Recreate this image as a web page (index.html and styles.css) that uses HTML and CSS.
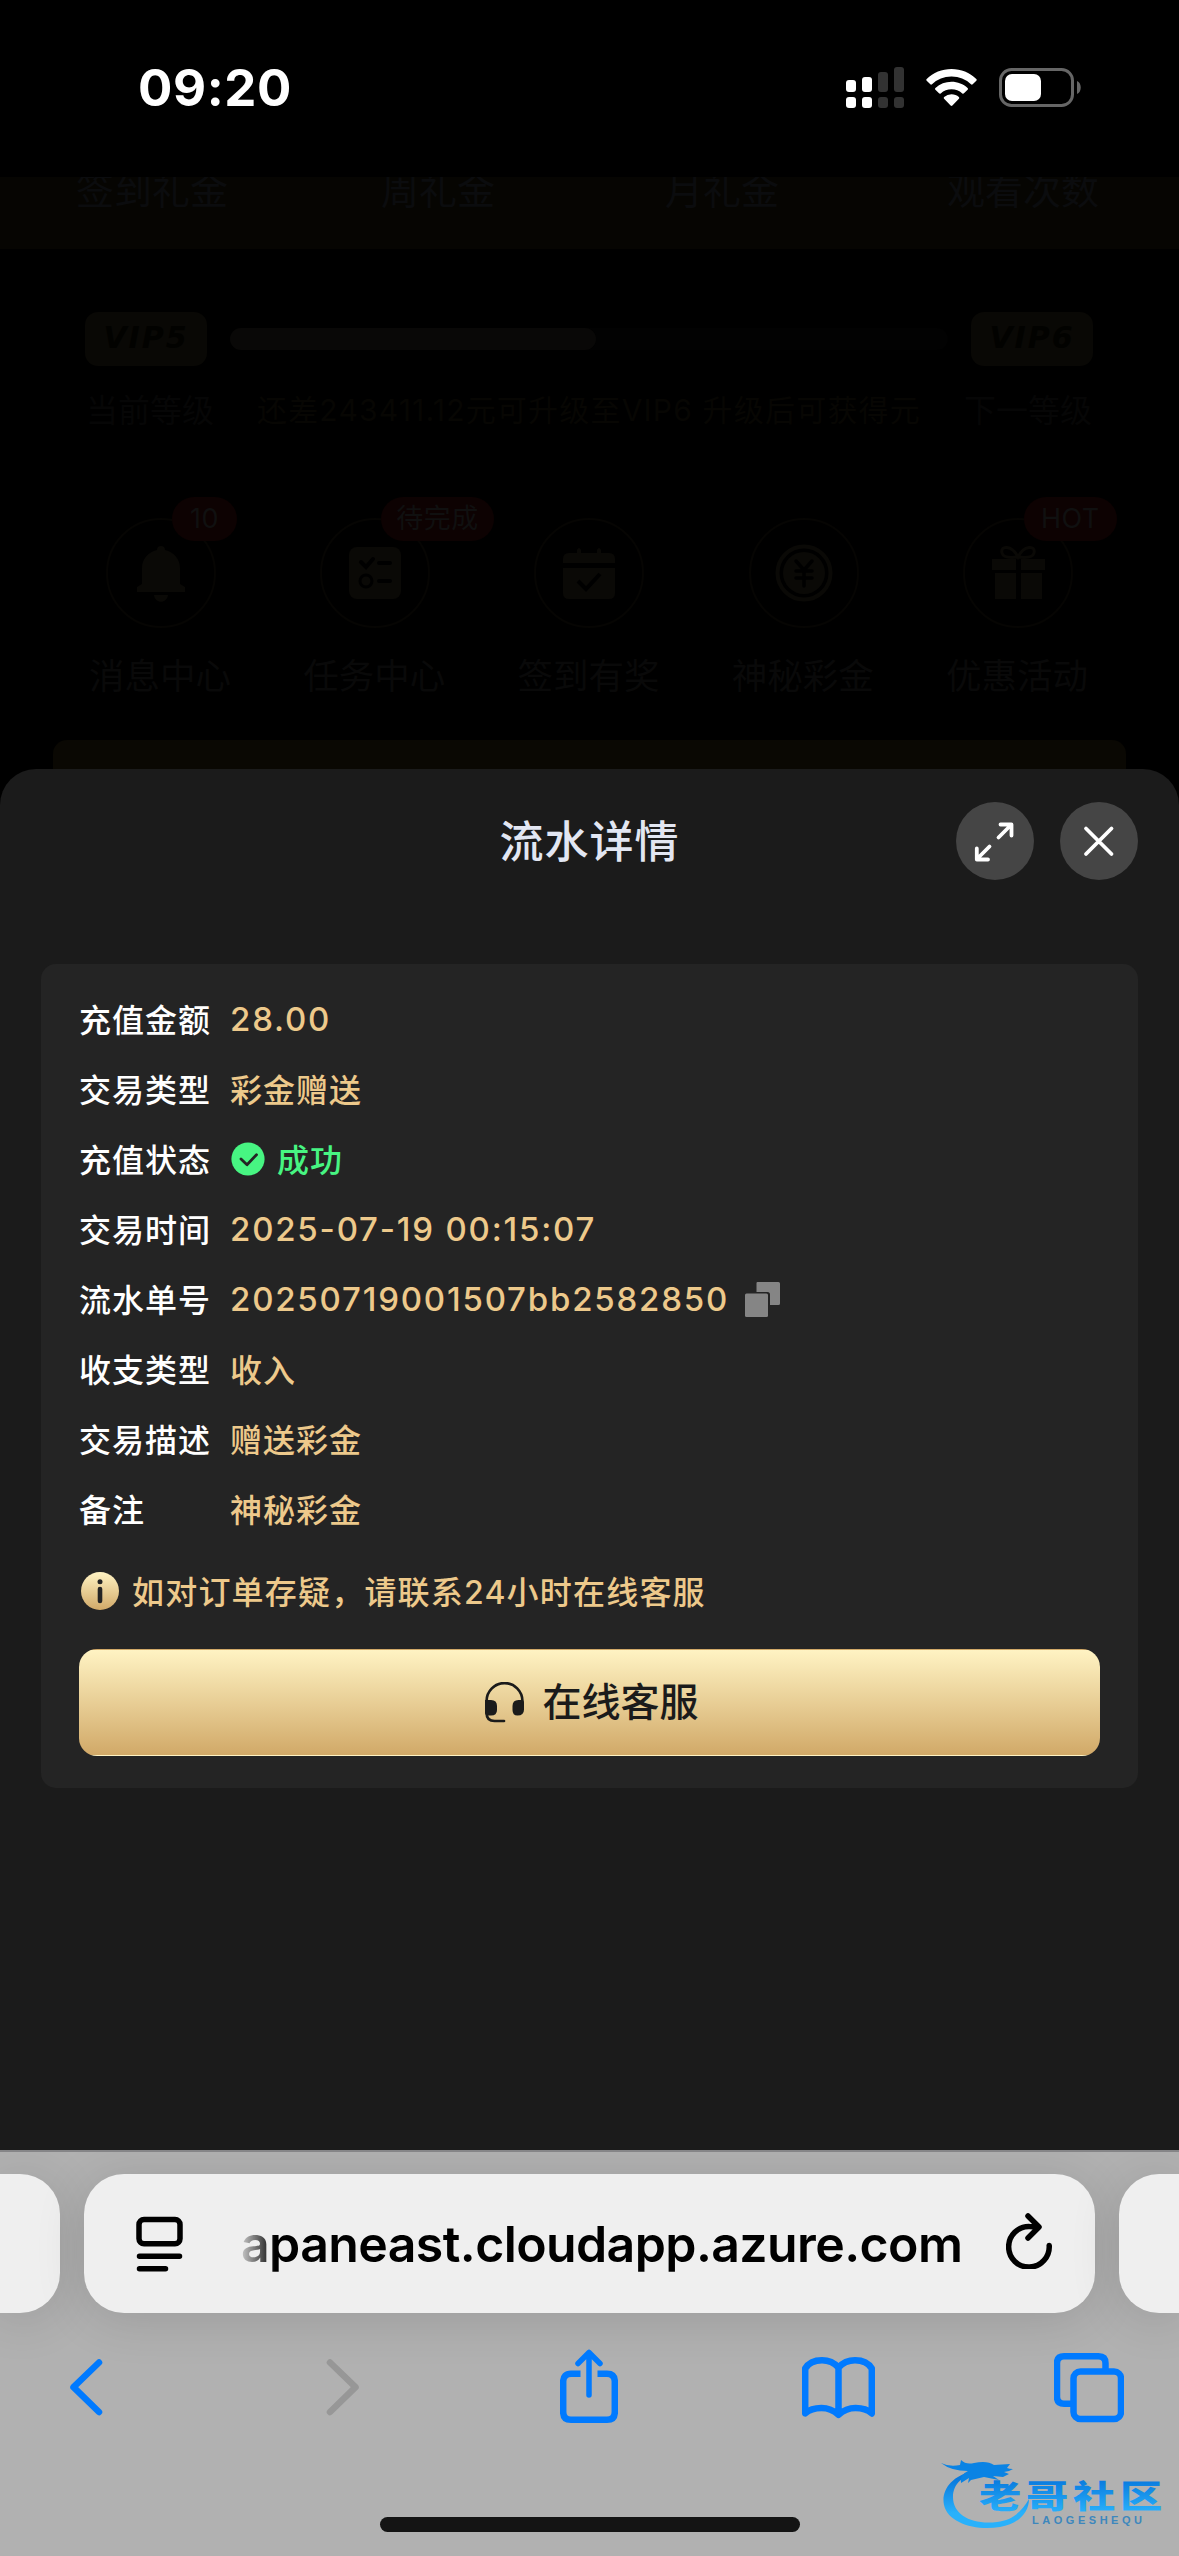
FILE: index.html
```html
<!DOCTYPE html>
<html lang="zh-CN">
<head>
<meta charset="utf-8">
<title>流水详情</title>
<link rel="stylesheet" href="styles.css">
</head>
<body>
<div class="screen">
  <header class="status">
    <span class="time">09:20</span>
    <div class="status-icons">
      <svg class="signal" width="58" height="42" viewBox="0 0 58 42">
        <g fill="#fff"><rect x="0" y="13" width="10" height="12" rx="3"/><rect x="16" y="10" width="10" height="15" rx="3"/><rect x="0" y="30" width="10" height="11" rx="3"/><rect x="16" y="30" width="10" height="11" rx="3"/></g>
        <g fill="#323232"><rect x="32" y="5" width="10" height="20" rx="3"/><rect x="48" y="0" width="10" height="25" rx="3"/><rect x="32" y="30" width="10" height="11" rx="3"/><rect x="48" y="30" width="10" height="11" rx="3"/></g>
      </svg>
      <svg class="wifi" width="51" height="38" viewBox="0 0 51 38" fill="#fff">
        <path d="M25.500 0C35 0 43.800 3.700 50.300 9.900q.9.900 0 1.800l-3.600 3.600q-.8.800-1.700 0A28 28 0 0 0 25.500 7.600 28 28 0 0 0 6 15.300q-.9.800-1.700 0L.7 11.700q-.9-.9 0-1.800C7.200 3.700 16 0 25.500 0z"/>
        <path d="M25.500 12.700c6.200 0 11.800 2.300 16.100 6.200q.9.900 0 1.800L38 24.300q-.8.800-1.700.1a16.200 16.200 0 0 0-21.600 0q-.9.700-1.700-.1l-3.600-3.600q-.9-.9 0-1.800a24 24 0 0 1 16.100-6.200z"/>
        <path d="M25.500 25.300c2.800 0 5.400 1 7.400 2.700q.9.900 0 1.800l-6.500 6.700q-.9.900-1.800 0l-6.500-6.700q-.9-.9 0-1.800a11.500 11.500 0 0 1 7.400-2.700z"/>
      </svg>
      <svg class="battery" width="83" height="39" viewBox="0 0 83 39">
        <rect x="1.500" y="1.500" width="72" height="36" rx="11" fill="none" stroke="#666" stroke-width="3"/>
        <rect x="6" y="6" width="36" height="27" rx="7" fill="#fff"/>
        <path d="M78 13c5 2 5 11 0 13z" fill="#666"/>
      </svg>
    </div>
  </header>

  <section class="page">
    <div class="gifts"><span>签到礼金</span><span>周礼金</span><span>月礼金</span><span>观看次数</span></div>
    <div class="vip">
      <div class="level"><b>VIP5</b></div>
      <div class="track"><div class="fill"></div></div>
      <div class="level"><b>VIP6</b></div>
    </div>
    <div class="vip-text"><span>当前等级</span><em>还差243411.12元可升级至VIP6 升级后可获得元</em><span>下一等级</span></div>
    <nav class="shortcuts">
      <a class="shortcut">
        <div class="ring"><svg width="60" height="60" viewBox="0 0 60 60" fill="#0a0906"><path d="M26 7a4 4 0 0 1 8 0c9 2 15 9 15 18v16l5 3v5H6v-5l5-3V25c0-9 6-16 15-18zM23 52h14c-1 9-13 9-14 0z"/></svg><i class="tag tag-count">10</i></div>
        <span>消息中心</span>
      </a>
      <a class="shortcut">
        <div class="ring"><svg width="60" height="60" viewBox="0 0 60 60"><rect x="4" y="4" width="52" height="52" rx="8" fill="#0a0906"/><path d="M16 19l5 5 7-8M34 20h11M34 38h11" fill="none" stroke="#000" stroke-width="4" stroke-linecap="round"/><circle cx="21" cy="38" r="6" fill="none" stroke="#000" stroke-width="3"/></svg><i class="tag tag-todo">待完成</i></div>
        <span>任务中心</span>
      </a>
      <a class="shortcut">
        <div class="ring"><svg width="60" height="60" viewBox="0 0 60 60" fill="#0a0906"><path d="M4 20v-4q0-6 6-6h8V7q2-4 4 0v3h16V7q2-4 4 0v3h8q6 0 6 6v4zM4 25h52v25q0 6-6 6H10q-6 0-6-6z"/><path d="M19 38l8 8 14-15" fill="none" stroke="#000" stroke-width="4"/></svg></div>
        <span>签到有奖</span>
      </a>
      <a class="shortcut">
        <div class="ring"><svg width="60" height="60" viewBox="0 0 60 60"><circle cx="30" cy="30" r="26.500" fill="none" stroke="#0a0906" stroke-width="4"/><circle cx="30" cy="30" r="21" fill="#0a0906"/><path d="M22 18l8 9 8-9M22 28h16M22 35h16M30 27v16" fill="none" stroke="#000" stroke-width="3.500" stroke-linecap="round"/></svg></div>
        <span>神秘彩金</span>
      </a>
      <a class="shortcut">
        <div class="ring"><svg width="60" height="60" viewBox="0 0 60 60" fill="#0a0906"><path d="M4 16h24v11H4zM33 16h24v11H33zM7 30h21v26H7zM33 30h21v26H33z"/><path d="M30 14c-6-12-18-12-16-4 1 4 8 5 16 4 8 1 15 0 16-4 2-8-10-8-16 4z" fill="none" stroke="#0a0906" stroke-width="3"/></svg><i class="tag">HOT</i></div>
        <span>优惠活动</span>
      </a>
    </nav>
    <div class="banner"></div>
  </section>

  <main class="sheet">
    <div class="sheet-head">
      <h1>流水详情</h1>
      <div class="actions">
        <button class="round"><svg width="78" height="78" viewBox="0 0 78 78"><path d="M42.500 35.500L55 23M44.500 22.500H55.500V33.500M33.500 44.500L21 57M20.800 46.500V57.500H32" /></svg></button>
        <button class="round"><svg width="78" height="78" viewBox="0 0 78 78"><path d="M26 26.500L51.500 52M51.500 26.500L26 52"/></svg></button>
      </div>
    </div>
    <article class="card">
      <dl>
        <div class="row"><dt>充值金额</dt><dd class="latin">28.00</dd></div>
        <div class="row"><dt>交易类型</dt><dd>彩金赠送</dd></div>
        <div class="row"><dt>充值状态</dt><dd class="ok"><svg width="34" height="34" viewBox="0 0 34 34"><circle cx="17" cy="17" r="16.600" fill="#47f582"/><path d="M10 17l6 5.700 9.500-10" fill="none" stroke="#242424" stroke-width="2.800" stroke-linecap="round" stroke-linejoin="round"/></svg><span>成功</span></dd></div>
        <div class="row"><dt>交易时间</dt><dd class="latin">2025-07-19 00:15:07</dd></div>
        <div class="row"><dt>流水单号</dt><dd class="latin serial">20250719001507bb2582850<svg width="35" height="35" viewBox="0 0 35 35" fill="#858585"><path d="M12.500 0h21q1.500 0 1.500 1.500v20q0 1.500-1.500 1.500H25V12.500Q25 10 22.500 10H11.500V1q0-1 1-1z"/><rect x="0" y="11.500" width="23" height="23.500" rx="1.500"/></svg></dd></div>
        <div class="row"><dt>收支类型</dt><dd>收入</dd></div>
        <div class="row"><dt>交易描述</dt><dd>赠送彩金</dd></div>
        <div class="row"><dt>备注</dt><dd>神秘彩金</dd></div>
      </dl>
      <p class="hint">
        <svg width="38" height="38" viewBox="0 0 38 38"><defs><linearGradient id="gold" x2="0" y2="1"><stop stop-color="#fff3c3"/><stop offset="1" stop-color="#d1a968"/></linearGradient></defs><circle cx="19" cy="19" r="19" fill="url(#gold)"/><circle cx="19" cy="9.700" r="2.500" fill="#242424"/><path d="M19 17v12" stroke="#242424" stroke-width="4.600" stroke-linecap="round"/></svg>
        <span>如对订单存疑，请联系24小时在线客服</span>
      </p>
      <button class="service">
        <svg width="39" height="41" viewBox="0 0 39 41"><path d="M1.600 24V19a17.900 17.900 0 0 1 35.800 0v6M1.600 25v6q0 8 8 8H19" fill="none" stroke="#1b1b1b" stroke-width="2.700" stroke-linecap="round"/><path d="M0 18H6q6 0 6 6v4q0 5.500-6 5.500H3q-3 0-3-3zM39 21q0-3-3-3h-2.500q-6 0-6 6v4q0 5.500 5 5.500 6.500 0 6.500-6z" fill="#1b1b1b"/></svg>
        <span>在线客服</span>
      </button>
    </article>
  </main>

  <footer class="browser">
    <div class="tabs">
      <div class="pill side-left"></div>
      <div class="pill address">
        <svg width="47" height="56" viewBox="0 0 47 56" fill="none" stroke="#000" stroke-width="5.500" stroke-linecap="round"><rect x="3" y="3.600" width="41" height="24.200" rx="5"/><path d="M3.500 40.200h40M3.500 52.800h26"/></svg>
        <div class="url">apaneast.cloudapp.azure.com</div>
        <svg class="reload" width="47" height="56" viewBox="0 0 47 56" fill="none" stroke="#000" stroke-width="5.500" stroke-linecap="round" stroke-linejoin="round"><path d="M43.200 32.500A20.300 20.300 0 1 1 23.500 13.500Q28 13.500 32 14M22 3l11 11-11 11"/></svg>
      </div>
      <div class="pill side-right"></div>
    </div>
    <nav class="toolbar">
      <svg class="back" width="34" height="75" viewBox="0 0 34 75"><path d="M30 13.500L4.500 38.200 30 63"/></svg>
      <svg class="off" width="34" height="75" viewBox="0 0 34 75"><path d="M4 13.500l25.500 24.700L4 63"/></svg>
      <svg width="58" height="75" viewBox="0 0 58 75"><path d="M20.500 24.800H11Q3.200 24.800 3.200 32.600V63Q3.200 70.800 11 70.800H47Q54.800 70.800 54.800 63V32.600Q54.800 24.800 47 24.800H37.500" stroke-linecap="butt"/><path d="M29 46V4M18 14.500L29 3.500l11 11" stroke-width="5.500"/></svg>
      <svg width="73" height="75" viewBox="0 0 73 75"><path d="M36.500 18.500Q30 11.200 20 11.200 8 11.200 3.200 19.500V64.500Q9 59 19.500 59 29 59 36.500 65.800 44 59 53.500 59 64 59 69.800 64.500V19.500Q65 11.200 53 11.200 43 11.200 36.500 18.500zV65"/></svg>
      <svg width="70" height="75" viewBox="0 0 70 75"><rect x="19.500" y="22.500" width="47.500" height="47.500" rx="7"/><path d="M51.500 22V14.300Q51.500 7.300 44.500 7.300H10Q3 7.300 3 14.300V47.700Q3 54.700 10 54.700H19" stroke-linecap="butt"/></svg>
    </nav>
    <div class="home-bar"></div>
    <div class="watermark">
      <svg width="224" height="74" viewBox="0 0 224 74">
        <defs><linearGradient id="blue" gradientUnits="userSpaceOnUse" x1="0" y1="20" x2="0" y2="54"><stop stop-color="#0879de"/><stop offset="1" stop-color="#29b1fb"/></linearGradient></defs>
        <path d="M32 12C10 17 0 32 3 46c4 18 31 26 56 22 18-3 29-14 29-28-7 12-16 21-32 23C31 66 12 56 12 38 12 25 22 16 36 14z" fill="url(#blue)"/>
        <path d="M0 4q8 4 19 2l1-5q5 5 13 3 13-3 20 2l16-1-3 4q2 1 6 1l-4 2-5 1 5 2-6 3-10-1 6 4-15-3-13 3-3 3 1-5-8 5q-2-8 7-12Q10 12 0 4z" fill="#0a83e4"/>
        <g transform="translate(38 0) scale(1.320 1)"><text class="mark-cn" x="0" y="49" fill="url(#blue)">老哥社区</text></g>
        <text class="mark-en" x="91" y="65" textLength="110" fill="#3d87bd">LAOGESHEQU</text>
      </svg>
    </div>
  </footer>
</div>
</body>
</html>
```
FILE: styles.css
```css
* { box-sizing: border-box; }
body { margin: 0; background: #000; font-family: Inter, "Noto Sans CJK SC", sans-serif; }
h1, dl, dd, p { margin: 0; }
button { padding: 0; border: 0; font: inherit; }
svg { display: block; flex: none; }
.screen { width: 1179px; height: 2556px; display: flex; flex-direction: column; overflow: hidden; background: #000; }

.status { height: 177px; flex: none; display: flex; justify-content: space-between; padding: 0 97px 0 138px; color: #fff; }
.time { margin-top: 56px; line-height: 64px; font-size: 51px; font-weight: 700; letter-spacing: .6px; }
.status-icons { display: flex; align-items: flex-start; gap: 22px; padding-top: 67px; }
.wifi { margin-top: 2px; }
.battery { margin-top: 1px; }

.page { height: 628px; flex: none; display: flex; flex-direction: column; overflow: hidden; color: #090909; white-space: nowrap; }
.gifts { height: 72px; flex: none; display: grid; grid-template-columns: 304px 268px 300px 302px; background: #060502; color: #0b0c0e; font-size: 38px; line-height: 26px; text-align: center; }
.vip { display: flex; align-items: center; margin: 63px 86px 0 85px; }
.level { width: 122px; height: 54px; flex: none; border-radius: 13px; background: #090805; color: #020200; text-align: center; line-height: 52px; }
.level b { font-family: "DejaVu Sans", sans-serif; font-style: italic; font-size: 30px; letter-spacing: 2px; }
.track { flex: 1; height: 22px; margin: 0 23px; border-radius: 11px; background: #020202; }
.fill { width: 51%; height: 22px; border-radius: 11px; background: #090807; }
.vip-text { display: flex; justify-content: space-between; align-items: center; height: 60px; margin: 12px 87px 0 86px; font-size: 32px; color: #060606; }
.vip-text em { font-style: normal; font-size: 30px; letter-spacing: 1.2px; color: #070603; }
.shortcuts { display: grid; grid-template-columns: repeat(5, 1fr); height: 222px; margin: 80px 54px 0 54px; }
.shortcut { display: flex; flex-direction: column; align-items: center; font-size: 35.500px; }
.shortcut > span { margin: 27px 2px 0 0; line-height: 44px; }
.ring { width: 110px; height: 110px; border: 2px solid #060503; border-radius: 50%; display: grid; place-items: center; position: relative; }
.tag { position: absolute; left: 59px; top: -23px; height: 44px; padding: 0 17px; border-radius: 22px; background: #0d0202; color: #101010; font-style: normal; font-size: 27px; line-height: 44px; letter-spacing: .5px; }
.tag-count { left: 64px; padding: 0 18px; }
.tag-todo { padding: 0 15px; }
.banner { flex: 1; margin: 0 53px; border-radius: 14px 14px 0 0; background: #0a0803; }

.sheet { flex: 1; margin-top: -36px; padding: 0 41px; border-radius: 36px 36px 0 0; background: #1b1b1b; position: relative; }
.sheet-head { height: 195px; display: grid; grid-template-columns: 182px 1fr 182px; padding-top: 33px; align-items: start; }
.sheet-head h1 { grid-column: 2; line-height: 80px; font-size: 44px; font-weight: 500; letter-spacing: 1px; text-align: center; color: #e2e6f2; }
.actions { display: flex; gap: 26px; }
.round { width: 78px; height: 78px; border-radius: 50%; background: #454545; }
.round svg { fill: none; stroke: #fff; stroke-width: 3.800; stroke-linecap: round; stroke-linejoin: round; }

.card { height: 824px; padding: 21px 38px 32px; border-radius: 15px; background: #242424; font-size: 32px; font-weight: 500; letter-spacing: 1px; }
.row { display: flex; height: 70px; align-items: center; padding-bottom: 4px; }
.row dt { width: 151px; color: #fff; }
.row dd { display: flex; align-items: center; color: #edc98b; }
.row .latin { font-size: 33px; font-weight: 550; letter-spacing: 1.800px; padding-top: 2px; }
.row .ok { gap: 12px; color: #47f582; }
.ok svg { margin: 2px 0 0 1px; }
.serial svg { margin: 0 0 0 16px; }
.hint { display: flex; align-items: center; gap: 13px; height: 92px; padding-left: 2px; color: #edc98b; }
.hint span { padding-bottom: 3px; letter-spacing: 1.200px; }
.service { display: flex; align-items: center; justify-content: center; gap: 18px; width: 1021px; height: 107px; margin-top: 12px; padding-left: 5px; border: 1px solid transparent; border-radius: 18px; background: linear-gradient(#fff3c3, #d1a968); color: #1b1b1b; font-size: 39px; font-weight: 500; }
.service span { padding-bottom: 7px; }

.browser { height: 406px; flex: none; border-top: 2px solid #858587; background: #b1b1b1; overflow: hidden; position: relative; }
.tabs { display: flex; gap: 24px; padding-top: 22px; }
.pill { height: 139px; flex: none; background: #efefef; box-shadow: 0 6px 50px rgba(0, 0, 0, .13); }
.side-left { width: 60px; border-radius: 0 40px 40px 0; }
.side-right { width: 60px; border-radius: 40px 0 0 40px; }
.address { width: 1011px; display: flex; align-items: center; justify-content: space-between; padding: 0 42px 0 52px; border-radius: 40px; }
.url { flex: none; width: 730px; margin-left: 23px; font-size: 50px; line-height: 64px; font-weight: 600; letter-spacing: -.600px; color: #000; white-space: nowrap; -webkit-mask-image: linear-gradient(90deg, rgba(0,0,0,.15), #000 34px); mask-image: linear-gradient(90deg, rgba(0,0,0,.15), #000 34px); }
.reload { margin-top: -6px; }
.toolbar { display: grid; grid-template-columns: repeat(5, 250px); justify-content: center; justify-items: center; padding: 36px 2px 0 0; }
.toolbar svg { fill: none; stroke: #007aff; stroke-width: 6.500; stroke-linecap: round; stroke-linejoin: round; }
.toolbar .back { margin-right: 6px; }
.toolbar .off { margin-left: 9px; stroke: #979797; }
.home-bar { width: 420px; height: 15px; margin: 93px auto 0; border-radius: 8px; background: #141414; }
.watermark { position: absolute; left: 941px; top: 307px; }
.mark-cn { font-family: "Noto Sans CJK SC", sans-serif; font-size: 32px; font-weight: 900; letter-spacing: 3.600px; }
.mark-en { font-family: "Liberation Sans", sans-serif; font-size: 11px; font-weight: 700; }
```
